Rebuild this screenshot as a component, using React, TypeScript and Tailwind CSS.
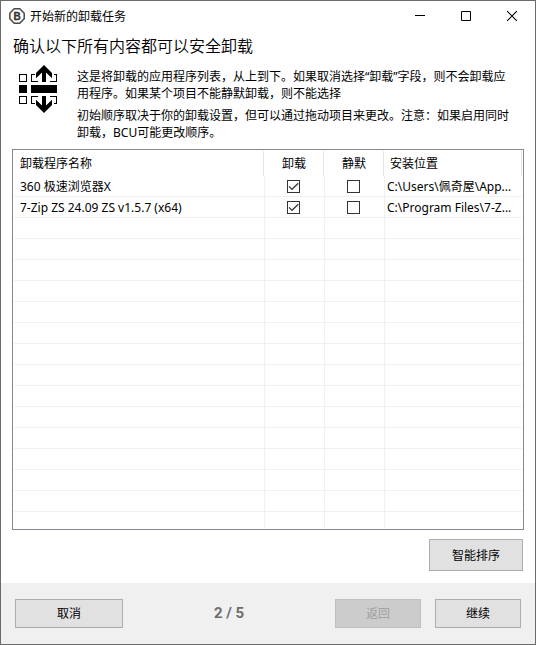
import { useState } from "react";

interface UninstallEntry {
  name: string;
  uninstall: boolean;
  quiet: boolean;
  location: string;
}

const INITIAL_ENTRIES: UninstallEntry[] = [
  { name: "360 极速浏览器X", uninstall: true, quiet: false, location: "C:\\Users\\佩奇屋\\App..." },
  { name: "7-Zip ZS 24.09 ZS v1.5.7 (x64)", uninstall: true, quiet: false, location: "C:\\Program Files\\7-Z..." },
];

const EMPTY_ROWS = 14;

function AppLogo() {
  return (
    <svg width="16" height="16" viewBox="0 0 16 16" aria-hidden="true">
      <path d="M5.200 .8h5.600L15.2 5.200v5.600L10.800 15.2H5.200L.8 10.800V5.200z" fill="#fff" stroke="#484848" strokeWidth="1.5" strokeLinejoin="round" />
      <text x="8" y="11.500" textAnchor="middle" fontSize="10" fontWeight="700" fill="#333" stroke="#333" strokeWidth=".3" fontFamily="Liberation Sans, sans-serif">
        B
      </text>
    </svg>
  );
}

function ReorderIcon() {
  return (
    <svg className="shrink-0" width="38" height="48" viewBox="0 0 38 48" shapeRendering="crispEdges" aria-hidden="true">
      <g fill="none" stroke="#000">
        <path d="M.5 9.5h7v7h-7zM.5 31.5h7v7h-7z" />
        <path d="M16 9.5h-3.500v7H19M35 9.5h2.500v7H31M19 31.5h-6.500v7H16M31 31.5h6.500v7H35" />
      </g>
      <path d="M0 20h8v8H0zM12 20h26v8H12z" />
      <g shapeRendering="auto">
        <path d="M25 0 33 8V13.200L27 7.500V17h-4V7.500L17 13.200V8z" />
        <path d="M25 48 33 40V34.800L27 40.500V31h-4v9.500L17 34.800V40z" />
      </g>
    </svg>
  );
}

function TitleBar() {
  const control = "flex h-[30px] w-[46px] items-center justify-center hover:bg-gray-200";

  return (
    <header className="flex h-[30px] items-center pl-2">
      <AppLogo />
      <span className="flex-1 pl-[5px]">开始新的卸载任务</span>
      <button type="button" aria-label="最小化" className={control}>
        <svg width="10" height="10" viewBox="0 0 10 10"><path d="M0 4.500h10" stroke="#000" /></svg>
      </button>
      <button type="button" aria-label="最大化" className={control}>
        <svg width="10" height="10" viewBox="0 0 10 10"><path d="M.5.5h9v9h-9z" fill="none" stroke="#000" /></svg>
      </button>
      <button type="button" aria-label="关闭" className={control}>
        <svg width="10" height="10" viewBox="0 0 10 10"><path d="M0 0l10 10M10 0L0 10" stroke="#000" strokeWidth="1.1" /></svg>
      </button>
    </header>
  );
}

interface CheckBoxProps {
  label: string;
  checked: boolean;
  onChange: () => void;
}

function CheckBox({ label, checked, onChange }: CheckBoxProps) {
  return (
    <span className="relative mx-auto block size-[13px]">
      <input
        type="checkbox"
        aria-label={label}
        checked={checked}
        onChange={onChange}
        className="block size-[13px] appearance-none border border-[#333] bg-white"
      />
      {checked && (
        <svg className="pointer-events-none absolute inset-0" width="13" height="13" viewBox="0 0 13 13">
          <path d="M2 6.300 5 9.300l6.300-6" fill="none" stroke="#333" strokeWidth="1.200" />
        </svg>
      )}
    </span>
  );
}

export default function App() {
  const [entries, setEntries] = useState(INITIAL_ENTRIES);

  const toggle = (index: number, field: "uninstall" | "quiet") => {
    setEntries(entries.map((e, i) => (i === index ? { ...e, [field]: !e[field] } : e)));
  };

  const headCell = "h-[25px] p-0 font-normal";
  const bodyCell = "h-[21px] border-r border-b border-[#f0f0f0] p-0";
  const button = "border border-[#adadad] bg-[#e1e1e1] hover:border-[#0078d7] hover:bg-[#e5f1fb]";

  return (
    <div className="flex min-h-screen flex-col border border-[#6b6b6b] bg-white font-['Noto_Sans','Noto_Sans_CJK_SC',sans-serif] text-[12px] leading-[17px] text-black">
      <TitleBar />

      <main className="flex-1 px-[11px] pb-3">
        <h1 className="pt-[3px] pb-[5px] pl-px text-[16px] leading-6 font-[350]">确认以下所有内容都可以安全卸载</h1>

        <div className="flex gap-5 pt-[2px] pr-3 pl-[7px]">
          <ReorderIcon />
          <div className="flex flex-col gap-[5px] pt-[3px]">
            <p>这是将卸载的应用程序列表，从上到下。如果取消选择“卸载”字段，则不会卸载应用程序。如果某个项目不能静默卸载，则不能选择</p>
            <p>初始顺序取决于你的卸载设置，但可以通过拖动项目来更改。注意：如果启用同时卸载，BCU可能更改顺序。</p>
          </div>
        </div>

        <div className="mt-2 border border-[#828790] p-px">
          <table className="w-full table-fixed border-separate border-spacing-0">
            <colgroup>
              <col />
              <col className="w-[60px]" />
              <col className="w-[60px]" />
              <col className="w-[137px]" />
            </colgroup>
            <thead>
              <tr>
                <th className={headCell}>
                  <div className="mr-px border-r border-[#e5e5e5] pl-[6px] text-left leading-[25px]">卸载程序名称</div>
                </th>
                <th className={headCell}>
                  <div className="mr-px border-r border-[#e5e5e5] leading-[25px]">卸载</div>
                </th>
                <th className={headCell}>
                  <div className="mr-px border-r border-[#e5e5e5] leading-[25px]">静默</div>
                </th>
                <th className={headCell}>
                  <div className="border-r border-[#e5e5e5] pl-[5px] text-left leading-[25px]">安装位置</div>
                </th>
              </tr>
            </thead>
            <tbody>
              {entries.map((entry, index) => (
                <tr key={entry.name}>
                  <td className={`${bodyCell} truncate pl-[6px]`}>{entry.name}</td>
                  <td className={`${bodyCell} pr-[2px]`}>
                    <CheckBox label={`卸载 ${entry.name}`} checked={entry.uninstall} onChange={() => toggle(index, "uninstall")} />
                  </td>
                  <td className={`${bodyCell} pr-[2px]`}>
                    <CheckBox label={`静默 ${entry.name}`} checked={entry.quiet} onChange={() => toggle(index, "quiet")} />
                  </td>
                  <td className="h-[21px] truncate border-b border-[#f0f0f0] p-0 pl-[2px]">{entry.location}</td>
                </tr>
              ))}
              {Array.from({ length: EMPTY_ROWS }, (_, i) => (
                <tr key={i}>
                  <td className={bodyCell} />
                  <td className={bodyCell} />
                  <td className={bodyCell} />
                  <td className="h-[21px] border-b border-[#f0f0f0] p-0" />
                </tr>
              ))}
              {/* cut-off last row, no bottom line */}
              <tr>
                <td className="h-4 border-r border-[#f0f0f0] p-0" />
                <td className="h-4 border-r border-[#f0f0f0] p-0" />
                <td className="h-4 border-r border-[#f0f0f0] p-0" />
                <td className="h-4 p-0" />
              </tr>
            </tbody>
          </table>
        </div>

        <div className="flex justify-end pt-[9px] pr-px">
          <button type="button" className={`${button} h-8 w-[94px]`}>智能排序</button>
        </div>
      </main>

      <footer className="flex items-center bg-[#f0f0f0] px-[14px] py-4">
        <button type="button" className={`${button} h-[29px] w-[108px]`}>取消</button>
        <span className="flex-1 text-center font-['Roboto',sans-serif] text-[15px] font-bold text-[#6d6d6d]">2 / 5</span>
        <button type="button" disabled className="mr-[14px] h-[29px] w-[86px] border border-[#bfbfbf] bg-[#cccccc] text-[#a0a0a0]">返回</button>
        <button type="button" className={`${button} h-[29px] w-[86px]`}>继续</button>
      </footer>
    </div>
  );
}
